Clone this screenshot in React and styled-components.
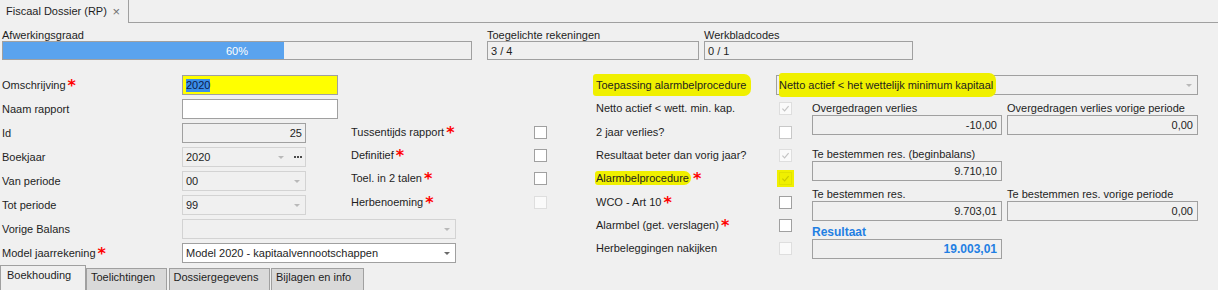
import React from "react";
import styled, { createGlobalStyle } from "styled-components";

const GlobalStyle = createGlobalStyle`
  html, body {
    margin: 0;
    padding: 0;
    background: #f0f0f0;
  }
  body {
    font-family: "Liberation Sans", Arial, sans-serif;
    font-size: 11px;
    color: #1e1e1e;
  }
`;

const Screen = styled.div`
  width: 1218px;
  height: 290px;
  overflow: hidden;
  display: flex;
  flex-direction: column;
  background: #f0f0f0;
`;

/* document tab strip */
const DocTabs = styled.div`
  display: flex;
  height: 23px;
  flex-shrink: 0;
`;

const DocTab = styled.div`
  box-sizing: border-box;
  width: 129px;
  display: flex;
  align-items: center;
  justify-content: space-between;
  padding: 0 8px 1px 6px;
  border-right: 1px solid #a0a0a0;
  white-space: nowrap;
`;

const Close = styled.span`
  color: #707070;
  font-size: 13px;
`;

const DocTabRest = styled.div`
  flex: 1;
  border-bottom: 1px solid #a0a0a0;
`;

/* header stats */
const Header = styled.div`
  display: flex;
  padding: 6px 0 0 2px;
`;

const Stat = styled.div`
  width: ${p => p.$w}px;
  margin-right: ${p => p.$space || 0}px;
  display: flex;
  flex-direction: column;
`;

const StatLabel = styled.div`
  height: 12px;
  line-height: 12px;
  white-space: nowrap;
`;

const StatBox = styled.div`
  box-sizing: border-box;
  height: 19px;
  display: flex;
  align-items: center;
  padding: 0 3px;
  border: 1px solid #a0a0a0;
  background: #f0f0f0;
`;

const Progress = styled.div`
  box-sizing: border-box;
  height: 19px;
  display: grid;
  border: 1px solid #a0a0a0;
  background: #f0f0f0;
  > * {
    grid-area: 1 / 1;
  }
`;

const ProgressFill = styled.div`
  background: #5aa3ee;
`;

const ProgressText = styled.div`
  align-self: center;
  text-align: center;
  color: #ffffff;
`;

/* body */
const Body = styled.div`
  display: flex;
  margin-top: 15px;
  padding-left: 2px;
`;

const LeftBlock = styled.div`
  width: 546px;
  display: flex;
  flex-direction: column;
  gap: 4px;
`;

const LeftTop = styled.div`
  display: flex;
`;

const FormCol = styled.div`
  width: 336px;
  display: flex;
  flex-direction: column;
  gap: 4px;
`;

const FormRow = styled.div`
  display: flex;
  align-items: center;
  height: 20px;
`;

const FieldLabel = styled.div`
  width: ${p => p.$w || 180}px;
  flex-shrink: 0;
  line-height: 13px;
  white-space: nowrap;
`;

const Req = styled.span`
  margin-left: 2px;
  color: #ff0000;
  font: bold 16px/13px "DejaVu Sans", sans-serif;
  vertical-align: top;
`;

const tones = {
  yellow: { bg: "#ffff00", border: "#a0a0a0" },
  white: { bg: "#ffffff", border: "#a0a0a0" },
  read: { bg: "#f0f0f0", border: "#a0a0a0" },
  off: { bg: "#f0f0f0", border: "#d3d3d3" },
};

const Field = styled.div`
  box-sizing: border-box;
  width: ${p => (p.$w ? `${p.$w}px` : "auto")};
  flex: ${p => (p.$w ? "none" : 1)};
  height: 20px;
  display: flex;
  align-items: center;
  padding: 0 3px 0 ${p => p.$padL ?? 3}px;
  border: 1px solid ${p => tones[p.$tone].border};
  background: ${p => tones[p.$tone].bg};
  white-space: nowrap;
`;

const FieldText = styled.span`
  flex: 1;
  text-align: ${p => p.$align || "left"};
`;

const Selected = styled.span`
  background: #3b8ee8;
  color: #0d1b4c;
  line-height: 13px;
`;

const Arrow = styled.span`
  width: 0;
  height: 0;
  margin-right: 2px;
  border-left: 3px solid transparent;
  border-right: 3px solid transparent;
  border-top: 3px solid ${p => (p.$dark ? "#6a6a6a" : "#b9b9b9")};
`;

const Dots = styled.span`
  display: flex;
  gap: 1px;
  margin-left: 8px;
  span {
    width: 2px;
    height: 2px;
    background: #4a4a4a;
  }
`;

const MidCol = styled.div`
  margin-left: 13px;
  padding-top: 45.5px;
  display: flex;
  flex-direction: column;
`;

const CheckRow = styled.div`
  height: ${70 / 3}px;
  display: flex;
  align-items: center;
`;

const checkBorders = {
  on: "#a0a0a0",
  soft: "#c8c8c8",
  off: "#dedede",
};

const Check = styled.div`
  box-sizing: border-box;
  width: 13px;
  height: 13px;
  flex-shrink: 0;
  display: flex;
  align-items: center;
  justify-content: center;
  border: 1px solid ${p => (p.$marked ? "#e2e200" : checkBorders[p.$state])};
  background: ${p => (p.$marked ? "#f0f000" : p.$state === "off" ? "#fafafa" : "#ffffff")};
  box-shadow: ${p => (p.$marked ? "0 0 0 2px #f0f000" : "none")};
`;

const Marker = styled.span`
  background: #f0f000;
  padding: ${p => p.$pad};
  margin-left: ${p => p.$ml || 0}px;
  border-radius: 3px 7px 7px 3px;
`;

/* right block */
const RightBlock = styled.div`
  width: 602px;
  margin-left: 48px;
  display: flex;
  flex-direction: column;
`;

const RightTop = styled.div`
  display: flex;
  align-items: center;
  height: 20px;
`;

const RightLower = styled.div`
  display: flex;
  margin-top: 2.2px;
`;

const CheckList = styled.div`
  display: flex;
  flex-direction: column;
`;

const ValueCol = styled.div`
  margin-left: 20px;
  padding-top: 5.3px;
  display: flex;
  flex-direction: column;
`;

const ValueRow = styled.div`
  display: grid;
  grid-template-columns: 190px 191px;
  column-gap: 5px;
  margin-top: ${p => p.$mt || 0}px;
`;

const ValueCell = styled.div`
  display: flex;
  flex-direction: column;
`;

const ValueLabel = styled.div`
  height: 13px;
  line-height: 13px;
  white-space: nowrap;
  color: ${p => (p.$accent ? "#1f7fe3" : "inherit")};
  font-weight: ${p => (p.$accent ? "bold" : "normal")};
  font-size: ${p => (p.$accent ? 12 : 11)}px;
`;

const ValueBox = styled.div`
  box-sizing: border-box;
  height: 20px;
  display: flex;
  align-items: center;
  justify-content: flex-end;
  padding: 0 4px;
  border: 1px solid #a0a0a0;
  background: #f0f0f0;
  color: ${p => (p.$accent ? "#1f7fe3" : "inherit")};
  font-weight: ${p => (p.$accent ? "bold" : "normal")};
  font-size: ${p => (p.$accent ? 12 : 11)}px;
`;

/* bottom tabs */
const SheetTabs = styled.div`
  display: flex;
  align-items: flex-end;
  height: 27px;
  margin-top: 2px;
  flex-shrink: 0;
`;

const SheetTab = styled.div`
  box-sizing: border-box;
  width: ${p => p.$w}px;
  height: ${p => (p.$active ? 27 : 24)}px;
  margin-right: ${p => (p.$active ? 0 : 1.5)}px;
  padding: ${p => (p.$active ? "3px 0 0 6px" : "2px 0 0 4px")};
  border: 1px solid #a0a0a0;
  border-bottom: none;
  background: ${p => (p.$active ? "#f0f0f0" : "#d9d9d9")};
  line-height: 13px;
  white-space: nowrap;
`;

const Tick = ({ color }) => (
  <svg width="9" height="9" viewBox="0 0 9 9">
    <path d="M1.4 4.6 L3.6 6.8 L7.6 2.2" fill="none" stroke={color} strokeWidth="1.2" />
  </svg>
);

const midChecks = [
  { label: "Tussentijds rapport", req: true, state: "on" },
  { label: "Definitief", req: true, state: "on" },
  { label: "Toel. in 2 talen", req: true, state: "on" },
  { label: "Herbenoeming", req: true, state: "off" },
];

const rightChecks = [
  { label: "Netto actief < wett. min. kap.", state: "off", checked: true },
  { label: "2 jaar verlies?", state: "soft" },
  { label: "Resultaat beter dan vorig jaar?", state: "off", checked: true },
  { label: "Alarmbelprocedure", req: true, state: "off", checked: true, marked: true },
  { label: "WCO - Art 10", req: true, state: "on" },
  { label: "Alarmbel (get. verslagen)", req: true, state: "on" },
  { label: "Herbeleggingen nakijken", state: "off" },
];

const sheets = [
  { label: "Boekhouding", w: 86, active: true },
  { label: "Toelichtingen", w: 81 },
  { label: "Dossiergegevens", w: 101 },
  { label: "Bijlagen en info", w: 93 },
];

const progress = 60;

export default function App() {
  return (
    <Screen>
      <GlobalStyle />
      <DocTabs>
        <DocTab>
          Fiscaal Dossier (RP)
          <Close>×</Close>
        </DocTab>
        <DocTabRest />
      </DocTabs>

      <Header>
        <Stat $w={470} $space={15}>
          <StatLabel>Afwerkingsgraad</StatLabel>
          <Progress>
            <ProgressFill style={{ width: `${progress}%` }} />
            <ProgressText>{progress}%</ProgressText>
          </Progress>
        </Stat>
        <Stat $w={212} $space={5}>
          <StatLabel>Toegelichte rekeningen</StatLabel>
          <StatBox>3 / 4</StatBox>
        </Stat>
        <Stat $w={209}>
          <StatLabel>Werkbladcodes</StatLabel>
          <StatBox>0 / 1</StatBox>
        </Stat>
      </Header>

      <Body>
        <LeftBlock>
          <LeftTop>
            <FormCol>
              <FormRow>
                <FieldLabel>Omschrijving<Req>*</Req></FieldLabel>
                <Field $w={156} $tone="yellow">
                  <Selected>2020</Selected>
                </Field>
              </FormRow>
              <FormRow>
                <FieldLabel>Naam rapport</FieldLabel>
                <Field $w={156} $tone="white" />
              </FormRow>
              <FormRow>
                <FieldLabel>Id</FieldLabel>
                <Field $w={124} $tone="read">
                  <FieldText $align="right">25</FieldText>
                </Field>
              </FormRow>
              <FormRow>
                <FieldLabel>Boekjaar</FieldLabel>
                <Field $w={124} $tone="off">
                  <FieldText>2020</FieldText>
                  <Arrow />
                  <Dots><span /><span /><span /></Dots>
                </Field>
              </FormRow>
              <FormRow>
                <FieldLabel>Van periode</FieldLabel>
                <Field $w={124} $tone="off">
                  <FieldText>00</FieldText>
                  <Arrow />
                </Field>
              </FormRow>
              <FormRow>
                <FieldLabel>Tot periode</FieldLabel>
                <Field $w={124} $tone="off">
                  <FieldText>99</FieldText>
                  <Arrow />
                </Field>
              </FormRow>
            </FormCol>

            <MidCol>
              {midChecks.map(c => (
                <CheckRow key={c.label}>
                  <FieldLabel $w={183}>
                    {c.label}
                    {c.req && <Req>*</Req>}
                  </FieldLabel>
                  <Check $state={c.state} />
                </CheckRow>
              ))}
            </MidCol>
          </LeftTop>

          <FormRow>
            <FieldLabel>Vorige Balans</FieldLabel>
            <Field $w={274} $tone="off">
              <FieldText />
              <Arrow />
            </Field>
          </FormRow>
          <FormRow>
            <FieldLabel>Model jaarrekening<Req>*</Req></FieldLabel>
            <Field $w={274} $tone="white">
              <FieldText>Model 2020 - kapitaalvennootschappen</FieldText>
              <Arrow $dark />
            </Field>
          </FormRow>
        </LeftBlock>

        <RightBlock>
          <RightTop>
            <FieldLabel>
              <Marker $pad="5px 5px 5px 3px" $ml={-3}>Toepassing alarmbelprocedure</Marker>
            </FieldLabel>
            <Field $tone="read" $padL={2}>
              <FieldText>
                <Marker $pad="6px 3px 6px 0">Netto actief &lt; het wettelijk minimum kapitaal</Marker>
              </FieldText>
              <Arrow />
            </Field>
          </RightTop>

          <RightLower>
            <CheckList>
              {rightChecks.map(c => (
                <CheckRow key={c.label}>
                  <FieldLabel $w={183}>
                    {c.marked ? (
                      <Marker $pad="1px 2px 1px 1px" $ml={-1}>{c.label}</Marker>
                    ) : (
                      c.label
                    )}
                    {c.req && <Req>*</Req>}
                  </FieldLabel>
                  <Check $state={c.state} $marked={c.marked}>
                    {c.checked && <Tick color={c.marked ? "#c9c900" : "#c4c4c4"} />}
                  </Check>
                </CheckRow>
              ))}
            </CheckList>

            <ValueCol>
              <ValueRow>
                <ValueCell>
                  <ValueLabel>Overgedragen verlies</ValueLabel>
                  <ValueBox>-10,00</ValueBox>
                </ValueCell>
                <ValueCell>
                  <ValueLabel>Overgedragen verlies vorige periode</ValueLabel>
                  <ValueBox>0,00</ValueBox>
                </ValueCell>
              </ValueRow>
              <ValueRow $mt={13}>
                <ValueCell>
                  <ValueLabel>Te bestemmen res. (beginbalans)</ValueLabel>
                  <ValueBox>9.710,10</ValueBox>
                </ValueCell>
              </ValueRow>
              <ValueRow $mt={6.5}>
                <ValueCell>
                  <ValueLabel>Te bestemmen res.</ValueLabel>
                  <ValueBox>9.703,01</ValueBox>
                </ValueCell>
                <ValueCell>
                  <ValueLabel>Te bestemmen res. vorige periode</ValueLabel>
                  <ValueBox>0,00</ValueBox>
                </ValueCell>
              </ValueRow>
              <ValueRow $mt={5}>
                <ValueCell>
                  <ValueLabel $accent>Resultaat</ValueLabel>
                  <ValueBox $accent>19.003,01</ValueBox>
                </ValueCell>
              </ValueRow>
            </ValueCol>
          </RightLower>
        </RightBlock>
      </Body>

      <SheetTabs>
        {sheets.map(s => (
          <SheetTab key={s.label} $w={s.w} $active={s.active}>
            {s.label}
          </SheetTab>
        ))}
      </SheetTabs>
    </Screen>
  );
}
